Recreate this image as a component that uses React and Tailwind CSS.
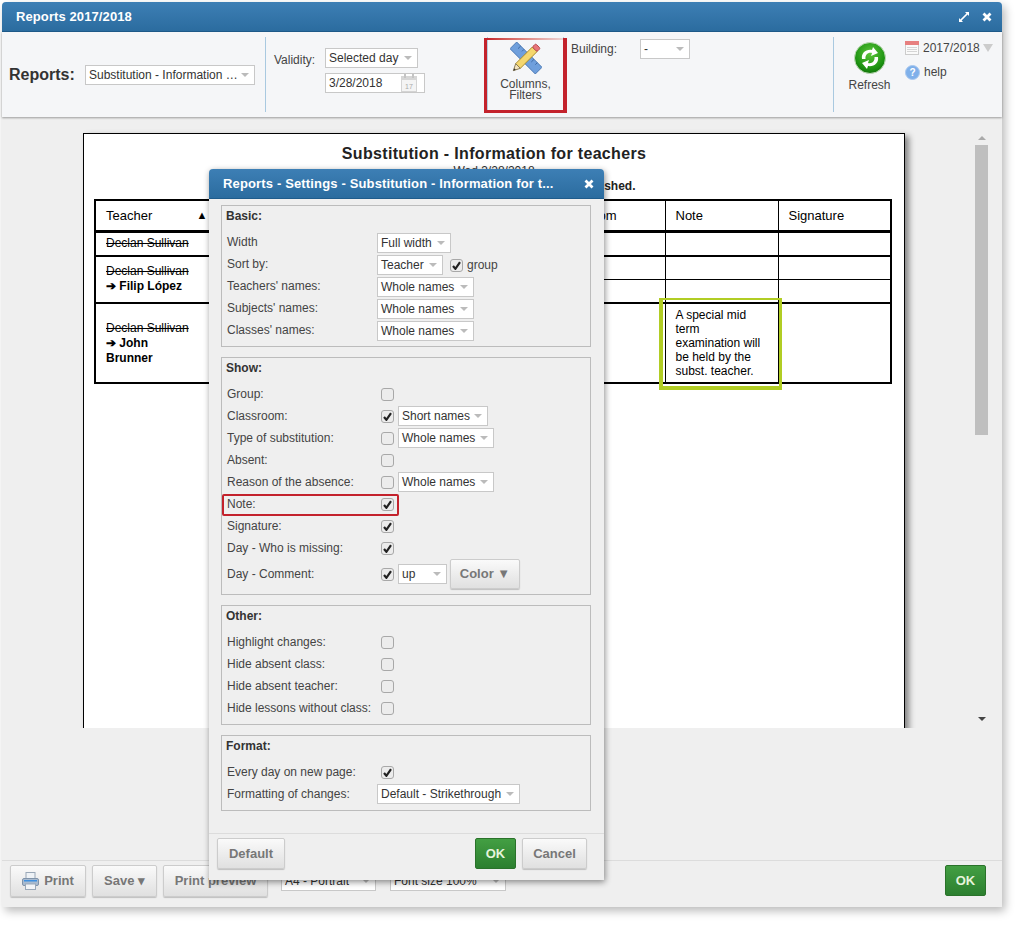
import React from "react";

function Select({ children, className = "" }) {
  return (
    <div className={"flex items-center justify-between h-[20px] border border-[#c8c8c8] bg-white pl-[3px] pr-[5px] text-[12px] text-[#333] whitespace-nowrap " + className}>
      <span>{children}</span>
      <span className="w-0 h-0 border-x-[4px] border-x-transparent border-t-[4px] border-t-[#bbb] shrink-0" />
    </div>
  );
}

function Checkbox({ checked, className = "" }) {
  return (
    <span className={"flex items-center justify-center w-[13px] h-[13px] rounded-[3px] border border-[#a8a8a8] bg-[#ececec] shrink-0 " + className}>
      {checked && (
        <svg width="9" height="9" viewBox="0 0 9 9">
          <path d="M1 5 L3.4 7.8 L8 1.2" fill="none" stroke="#222" strokeWidth="2.2" />
        </svg>
      )}
    </span>
  );
}

function Btn({ children, className = "" }) {
  return (
    <button className={"flex items-center justify-center gap-[5px] border border-[#ccc] rounded-[2px] bg-linear-to-b from-[#fafafa] to-[#e0e0e0] text-[13px] font-bold text-[#777] shadow-[0_1px_1px_rgba(0,0,0,0.2)] " + className}>
      {children}
    </button>
  );
}

function OkBtn({ className = "" }) {
  return (
    <button className={"flex items-center justify-center border border-[#2a722a] rounded-[2px] bg-linear-to-b from-[#439f43] to-[#2c7f2f] text-[13px] font-bold text-[#e6f4dc] " + className}>
      OK
    </button>
  );
}

function Box({ title, titleH, className = "", children }) {
  return (
    <div className={"border border-[#bcbcbc] " + className}>
      <div className={"pl-[4px] pt-[1px] text-[12px] font-bold text-[#333] " + titleH}>{title}</div>
      {children}
    </div>
  );
}

function Row({ label, children, className = "h-[22px]", labelClass = "-mt-[1px]" }) {
  return (
    <div className={"flex items-center pl-[5px] text-[12px] text-[#444] " + className}>
      <span className={"w-[150px] shrink-0 " + labelClass}>{label}</span>
      {children}
    </div>
  );
}

function CheckRow({ label, checked, children, className }) {
  return (
    <Row label={label} className={className}>
      <Checkbox checked={checked} className="ml-[4px]" />
      {children}
    </Row>
  );
}

function CloseIcon({ size = 10 }) {
  return (
    <svg width={size} height={size} viewBox="0 0 10 10">
      <path d="M1.5 1.5 L8.5 8.5 M8.5 1.5 L1.5 8.5" stroke="#fff" strokeWidth="2.8" />
    </svg>
  );
}

function ToolsIcon() {
  return (
    <svg width="32" height="32" viewBox="0 0 34 34">
      <g transform="rotate(45 17 17)">
        <rect x="-2" y="12" width="38" height="10" fill="#6f9fdc" stroke="#4a78b5" />
        <path d="M4 12v4M9 12v3M14 12v4M19 12v3M24 12v4M29 12v3" stroke="#3f6aa5" />
      </g>
      <g transform="rotate(-45 17 17)">
        <rect x="5" y="13.5" width="25" height="7" fill="#f5d76e" stroke="#a98c2c" />
        <rect x="30" y="13.5" width="5" height="7" rx="1.5" fill="#e8757a" stroke="#b5484d" />
        <path d="M5 13.5 L-2 17 L5 20.5 Z" fill="#f3e3bd" stroke="#8a7a55" />
        <path d="M0.5 15.8 L-2 17 L0.5 18.2 Z" fill="#333" />
      </g>
    </svg>
  );
}

function RefreshIcon() {
  return (
    <svg width="32" height="32" viewBox="0 0 32 32">
      <defs>
        <radialGradient id="refresh-bg" cx="50%" cy="35%" r="70%">
          <stop offset="0%" stopColor="#5cc63a" />
          <stop offset="70%" stopColor="#1d9312" />
          <stop offset="100%" stopColor="#0c6a08" />
        </radialGradient>
      </defs>
      <circle cx="16" cy="16" r="15.5" fill="url(#refresh-bg)" stroke="#bfd9b8" />
      <path d="M8 17 C7 11 12 7 18 8 L19 5 L24 11 L17 14 L18 11 C14 10 11 13 11.5 17 Z" fill="#fff" />
      <path d="M24 15 C25 21 20 25 14 24 L13 27 L8 21 L15 18 L14 21 C18 22 21 19 20.5 15 Z" fill="#fff" />
    </svg>
  );
}

function CalendarIcon() {
  return (
    <svg width="14" height="14" viewBox="0 0 14 14">
      <rect x="0.5" y="0.5" width="13" height="13" fill="#fafafa" stroke="#ccc" />
      <rect x="0" y="0" width="14" height="4" fill="#e77f7f" />
      <path d="M2 6.5h10M2 8.5h10M2 10.5h10" stroke="#d5d5d5" />
    </svg>
  );
}

function DateIcon() {
  return (
    <svg width="16" height="18" viewBox="0 0 16 18">
      <rect x="0.5" y="3" width="15" height="14.5" fill="#f4f4f4" stroke="#d4d4d4" />
      <rect x="0" y="2" width="16" height="4" fill="#d6d6d6" />
      <rect x="3" y="0" width="2" height="4" fill="#c4c4c4" />
      <rect x="11" y="0" width="2" height="4" fill="#c4c4c4" />
      <text x="8" y="15" textAnchor="middle" fontSize="7" fill="#aaa" fontFamily="Liberation Sans, sans-serif">17</text>
    </svg>
  );
}

function PrintIcon() {
  return (
    <svg width="17" height="18" viewBox="0 0 17 18">
      <rect x="4" y="0.5" width="9" height="7" fill="#eef2f6" stroke="#9aa8b8" />
      <rect x="0.5" y="6.5" width="16" height="7" rx="1.5" fill="#a9bbd0" stroke="#7f93aa" />
      <rect x="2" y="8" width="13" height="1.5" fill="#3d8fe0" />
      <rect x="3.5" y="12" width="10" height="5.5" fill="#f2f4f7" stroke="#9aa8b8" />
    </svg>
  );
}

export default function App() {
  return (
    <div className="w-[1020px] h-[925px] bg-white pt-[2px] pl-[2px] font-['Liberation_Sans',Arial,sans-serif] text-[#333] overflow-hidden">
      <div className="relative flex flex-col w-[1000px] h-[905px] rounded-t-[4px] bg-[#efefef] shadow-[3px_4px_10px_rgba(0,0,0,0.28)]">
        {/* title bar */}
        <div className="flex items-center justify-between h-[30px] pl-[14px] pr-[10px] rounded-t-[4px] border-b border-[#1f5c8c] bg-linear-to-b from-[#3d7fb5] to-[#2b6c9f]">
          <span className="text-[13px] font-bold text-white tracking-[0.1px]">Reports 2017/2018</span>
          <div className="flex items-center gap-[13px]">
            <svg width="10" height="10" viewBox="0 0 10 10">
              <path d="M6 0h4v4L8.6 2.6 2.6 8.6 4 10H0V6l1.4 1.4 6-6z" fill="#fff" />
            </svg>
            <CloseIcon />
          </div>
        </div>

        {/* toolbar */}
        <div className="flex h-[85px] py-[5px] bg-[#f5f6f8] shadow-[0_1px_2px_rgba(0,0,0,0.35)] z-10">
          <div className="flex items-center w-[264px] pl-[7px] border-r border-[#a9c9e0]">
            <span className="w-[76px] text-[16px] font-bold text-[#333]">Reports:</span>
            <Select className="w-[170px]">Substitution - Information …</Select>
          </div>
          <div className="flex w-[221px] pl-[8px] pt-[11px]">
            <span className="w-[51px] text-[12px] text-[#444] pt-[3px]">Validity:</span>
            <div className="flex flex-col gap-[5px]">
              <Select className="w-[93px]">Selected day</Select>
              <div className="flex items-center justify-between w-[100px] h-[20px] border border-[#c8c8c8] bg-white pl-[3px] pr-[7px] text-[12px]">
                <span>3/28/2018</span>
                <DateIcon />
              </div>
            </div>
          </div>
          <div className="flex flex-col items-center w-[77px] border-x border-[#b4cde0] pt-[5px] text-[12px] leading-[11px] text-[#444] text-center">
            <ToolsIcon />
            <span className="mt-[5px]">Columns,</span>
            <span>Filters</span>
          </div>
          <div className="flex w-[270px] pl-[7px] pt-[2px] border-r border-[#a9c9e0]">
            <span className="w-[69px] text-[12px] text-[#444] pt-[1px]">Building:</span>
            <Select className="w-[50px]">-</Select>
          </div>
          <div className="flex flex-col items-center w-[71px] pt-[5px] text-[12px] text-[#444]">
            <RefreshIcon />
            <span className="mt-[2px]">Refresh</span>
          </div>
          <div className="flex flex-col gap-[6px] pt-[2px] text-[12px] text-[#444]">
            <div className="flex items-center gap-[4px]">
              <CalendarIcon />
              <span>2017/2018</span>
              <span className="w-0 h-0 border-x-[5px] border-x-transparent border-t-[8px] border-t-[#ccc] -ml-[1px]" />
            </div>
            <div className="flex items-center gap-[4px]">
              <span className="flex items-center justify-center w-[15px] h-[15px] rounded-full bg-[#7fb0ea] border border-[#a9c8ef] text-[10px] font-bold text-white">?</span>
              <span>help</span>
            </div>
          </div>
        </div>

        {/* document view */}
        <div className="flex h-[611px] pl-[81px] pt-[16px] overflow-hidden">
          <div className="w-[822px] h-[800px] shrink-0 border border-black bg-white shadow-[4px_3px_6px_rgba(0,0,0,0.45)] px-[10px] pt-[10px]">
            <div className="h-[20px] text-center text-[16px] leading-[20px] font-bold text-[#222] tracking-[0.33px]">
              Substitution - Information for teachers
            </div>
            <div className="h-[15px] text-center text-[12px] leading-[15px] text-[#333]">Wed 3/28/2018</div>
            <div className="h-[15px] pr-[3px] text-center text-[12px] leading-[15px] font-bold text-[#222]">
              This substitution plan has not yet been published.
            </div>
            <table className="mt-[5px] w-[796px] table-fixed border-collapse border-2 border-black text-[12px] text-black">
              <colgroup>
                <col className="w-[119px]" />
                <col className="w-[110px]" />
                <col className="w-[110px]" />
                <col className="w-[110px]" />
                <col className="w-[121px]" />
                <col className="w-[113px]" />
                <col className="w-[113px]" />
              </colgroup>
              <thead>
                <tr className="h-[31px] border-b-[3px] border-black text-[13px]">
                  <th className="pl-[10px] pr-[6px] font-normal text-left">
                    <div className="flex items-center justify-between">
                      <span>Teacher</span>
                      <span className="text-[11px]">▲</span>
                    </div>
                  </th>
                  <th className="border-l border-black" />
                  <th className="border-l border-black" />
                  <th className="border-l border-black" />
                  <th className="border-l border-black pl-[10px] font-normal text-left">Classroom</th>
                  <th className="border-l border-black pl-[10px] font-normal text-left">Note</th>
                  <th className="border-l border-black pl-[10px] font-normal text-left">Signature</th>
                </tr>
              </thead>
              <tbody>
                <tr className="h-[25px] border-b-2 border-black">
                  <td className="pl-[10px] pb-[1px] line-through">Declan Sullivan</td>
                  <td className="border-l border-black" />
                  <td className="border-l border-black" />
                  <td className="border-l border-black" />
                  <td className="border-l border-black" />
                  <td className="border-l border-black" />
                  <td className="border-l border-black" />
                </tr>
                <tr className="h-[23px] border-b border-black">
                  <td rowSpan={2} className="pl-[10px] pb-[1px] leading-[15px] border-b-2 border-black">
                    <div className="line-through">Declan Sullivan</div>
                    <div className="font-bold">➔ Filip López</div>
                  </td>
                  <td className="border-l border-black" />
                  <td className="border-l border-black" />
                  <td className="border-l border-black" />
                  <td className="border-l border-black" />
                  <td className="border-l border-black" />
                  <td className="border-l border-black" />
                </tr>
                <tr className="h-[24px] border-b-2 border-black">
                  <td className="border-l border-black" />
                  <td className="border-l border-black" />
                  <td className="border-l border-black" />
                  <td className="border-l border-black" />
                  <td className="border-l border-black" />
                  <td className="border-l border-black" />
                </tr>
                <tr className="h-[80px]">
                  <td className="pl-[10px] leading-[15px]">
                    <div className="line-through">Declan Sullivan</div>
                    <div className="font-bold">➔ John</div>
                    <div className="font-bold">Brunner</div>
                  </td>
                  <td className="border-l border-black" />
                  <td className="border-l border-black" />
                  <td className="border-l border-black" />
                  <td className="border-l border-black" />
                  <td className="border-l border-black px-[10px] leading-[14px]">
                    A special mid term examination will be held by the subst. teacher.
                  </td>
                  <td className="border-l border-black" />
                </tr>
              </tbody>
            </table>
          </div>
          <div className="flex flex-col items-center w-[13px] ml-[70px] pt-[1px] pb-[7px] shrink-0">
            <span className="mt-[2px] w-0 h-0 border-x-[4px] border-x-transparent border-b-[4px] border-b-[#aaa]" />
            <div className="mt-[5px] w-[13px] h-[290px] bg-[#bfbfbf]" />
            <span className="mt-auto w-0 h-0 border-x-[4px] border-x-transparent border-t-[4px] border-t-[#444]" />
          </div>
        </div>

        {/* bottom bar */}
        <div className="flex mt-auto h-[47px] border-t border-[#dcdcdc] pl-[8px] pt-[4px]">
          <Btn className="w-[76px] h-[32px]"><PrintIcon />Print</Btn>
          <Btn className="w-[65px] h-[32px] ml-[6px]">Save ▾</Btn>
          <Btn className="w-[105px] h-[32px] ml-[6px]">Print preview</Btn>
          <Select className="w-[95px] mt-[6px] ml-[13px]">A4 - Portrait</Select>
          <Select className="w-[116px] mt-[6px] ml-[14px]">Font size 100%</Select>
          <OkBtn className="w-[41px] h-[31px] ml-[439px]" />
        </div>

        {/* settings dialog */}
        <div className="absolute left-[207px] top-[167px] flex flex-col w-[395px] h-[711px] rounded-t-[4px] bg-[#efefef] shadow-[1px_2px_6px_rgba(0,0,0,0.45)] z-20">
          <div className="flex items-center justify-between h-[30px] pl-[14px] pr-[10px] rounded-t-[4px] border-b border-[#1f5c8c] bg-linear-to-b from-[#3d7fb5] to-[#2b6c9f]">
            <span className="text-[13px] font-bold text-white whitespace-nowrap tracking-[0.15px]">Reports - Settings - Substitution - Information for t...</span>
            <CloseIcon />
          </div>
          <div className="flex flex-col gap-[10px] pl-[12px] pr-[13px] pt-[6px]">
            <Box title="Basic:" titleH="h-[26px]" className="h-[142px]">
              <Row label="Width" labelClass="-mt-[3px]"><Select className="w-[74px]">Full width</Select></Row>
              <Row label="Sort by:" labelClass="-mt-[3px]">
                <Select className="w-[66px]">Teacher</Select>
                <Checkbox checked className="ml-[7px]" />
                <span className="ml-[4px]">group</span>
              </Row>
              <Row label="Teachers' names:" labelClass="-mt-[3px]"><Select className="w-[97px]">Whole names</Select></Row>
              <Row label="Subjects' names:" labelClass="-mt-[3px]"><Select className="w-[97px]">Whole names</Select></Row>
              <Row label="Classes' names:" labelClass="-mt-[3px]"><Select className="w-[97px]">Whole names</Select></Row>
            </Box>
            <Box title="Show:" titleH="h-[25px]" className="h-[238px]">
              <CheckRow label="Group:" />
              <CheckRow label="Classroom:" checked><Select className="w-[90px] ml-[4px]">Short names</Select></CheckRow>
              <CheckRow label="Type of substitution:"><Select className="w-[96px] ml-[4px]">Whole names</Select></CheckRow>
              <CheckRow label="Absent:" />
              <CheckRow label="Reason of the absence:"><Select className="w-[96px] ml-[4px]">Whole names</Select></CheckRow>
              <CheckRow label="Note:" checked />
              <CheckRow label="Signature:" checked />
              <CheckRow label="Day - Who is missing:" checked />
              <CheckRow label="Day - Comment:" checked className="h-[30px]">
                <Select className="w-[49px] ml-[4px]">up</Select>
                <Btn className="w-[70px] h-[30px] ml-[3px]">Color ▼</Btn>
              </CheckRow>
            </Box>
            <Box title="Other:" titleH="h-[25px]" className="h-[120px]">
              <CheckRow label="Highlight changes:" />
              <CheckRow label="Hide absent class:" />
              <CheckRow label="Hide absent teacher:" />
              <CheckRow label="Hide lessons without class:" />
            </Box>
            <Box title="Format:" titleH="h-[25px]" className="h-[76px]">
              <CheckRow label="Every day on new page:" checked />
              <Row label="Formatting of changes:"><Select className="w-[143px]">Default - Strikethrough</Select></Row>
            </Box>
          </div>
          <div className="flex items-start mt-auto h-[47px] border-t border-[#dcdcdc] pl-[8px] pr-[17px] pt-[4px]">
            <Btn className="w-[68px] h-[31px]">Default</Btn>
            <OkBtn className="w-[41px] h-[31px] ml-auto" />
            <Btn className="w-[65px] h-[31px] ml-[6px]">Cancel</Btn>
          </div>
        </div>

        {/* annotations drawn on top of the screenshot */}
        <div className="absolute left-[482px] top-[36px] w-[83px] h-[75px] border-l-[3px] border-b-[3px] border-r-[4px] border-[#c3222c] border-t-0 z-30">
          <div className="h-[2px] bg-linear-to-r from-[#c3222c] to-[#ecd5d6]" />
        </div>
        <div className="absolute left-[220px] top-[492px] w-[177px] h-[22px] border-2 border-[#c3222c] rounded-[2px] z-30" />
        <div className="absolute left-[657px] top-[296px] w-[123px] h-[92px] border-l-[4px] border-b-[4px] border-r-[3px] border-t-[2px] border-[#b1cd24] z-10" />
      </div>
    </div>
  );
}
